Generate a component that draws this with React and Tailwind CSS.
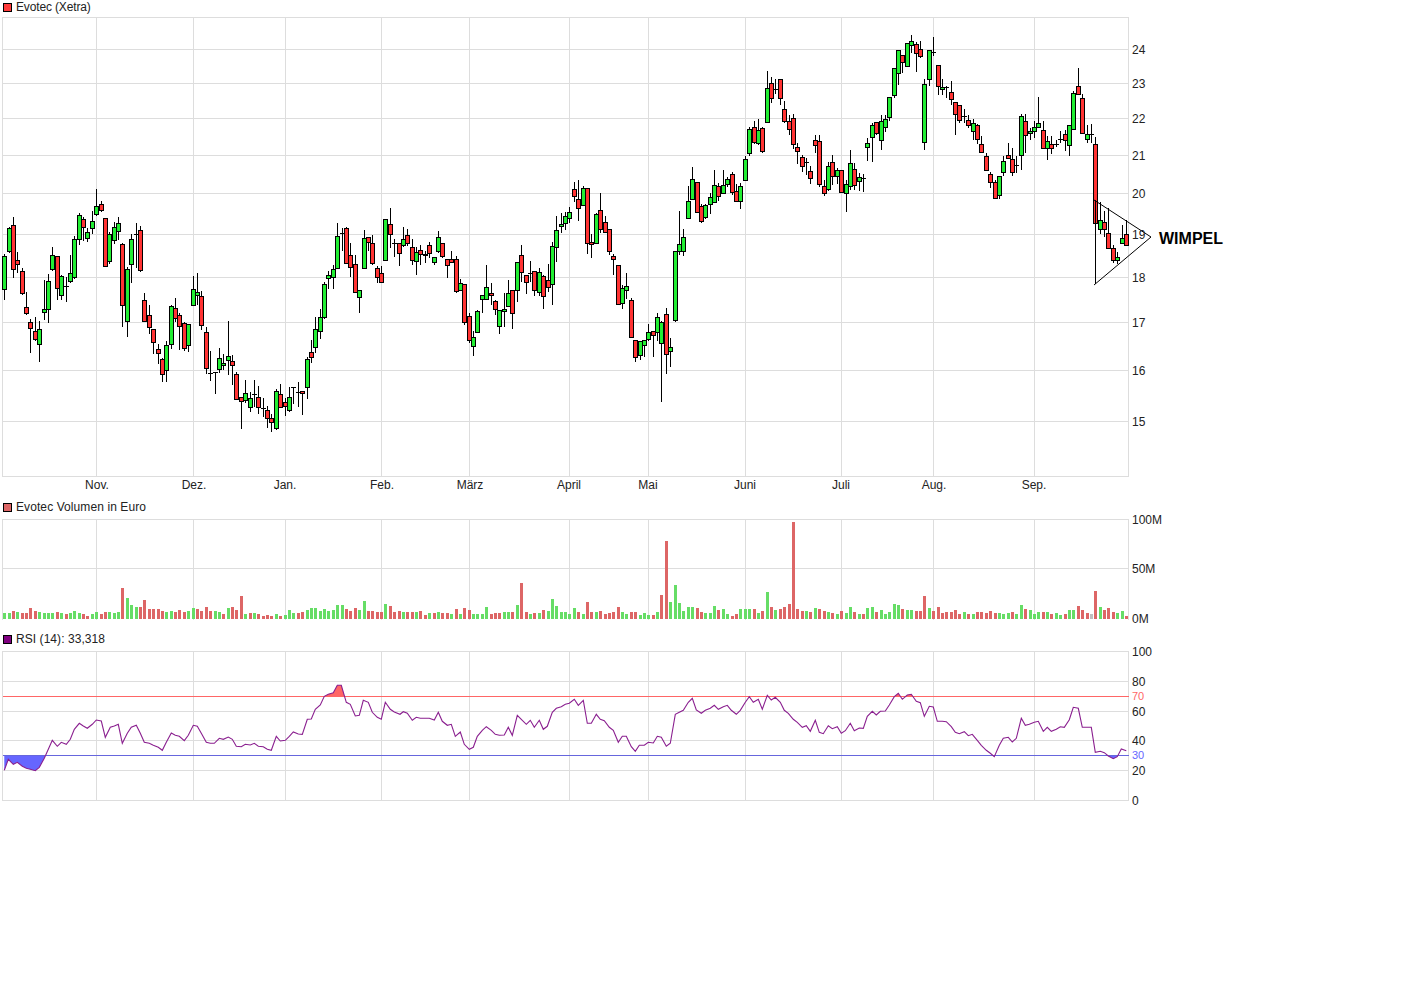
import React from "react";

// wick top, wick bottom, body top, body bottom, colour
const candles = [
  [254,300,256,289,"g"],[227,253,228,251,"g"],[217,278,225,269,"r"],[252,273,260,264,"r"],[268,295,271,293,"r"],
  [292,315,307,313,"r"],[319,353,322,328,"r"],[317,341,331,339,"r"],[321,362,329,344,"g"],[280,320,309,312,"g"],
  [274,323,281,309,"g"],[247,271,255,269,"g"],[256,300,256,288,"r"],[275,300,276,295,"g"],[277,302,286,286,"g"],
  [255,283,273,281,"g"],[236,279,239,277,"g"],[213,245,215,239,"g"],[217,241,219,227,"r"],[228,242,232,238,"g"],
  [211,234,221,228,"g"],[189,216,206,214,"g"],[201,212,204,210,"r"],[218,266,218,266,"r"],[232,264,234,261,"g"],
  [222,244,227,240,"g"],[217,240,223,231,"g"],[243,327,244,305,"r"],[267,337,269,321,"g"],[234,283,239,264,"g"],
  [223,268,234,234,"g"],[226,272,230,270,"r"],[293,322,300,321,"r"],[305,334,315,327,"r"],[329,354,329,342,"r"],
  [344,364,349,353,"r"],[358,382,359,374,"r"],[341,382,345,370,"g"],[305,349,306,344,"g"],[298,322,308,318,"r"],
  [313,350,315,326,"r"],[322,351,323,348,"r"],[324,352,324,345,"g"],[276,305,289,305,"g"],[273,305,292,295,"g"],
  [291,330,296,325,"r"],[327,374,332,368,"r"],[351,381,373,373,"r"],[372,394,372,372,"r"],[348,373,358,369,"g"],
  [354,370,363,365,"g"],[321,375,356,360,"g"],[355,385,361,365,"r"],[372,399,374,399,"r"],[397,429,397,401,"r"],
  [380,403,393,400,"g"],[392,412,398,407,"g"],[380,407,394,394,"g"],[386,414,397,407,"r"],[398,417,408,408,"g"],
  [406,428,410,418,"r"],[414,432,418,422,"r"],[389,430,391,428,"g"],[384,407,394,407,"r"],[398,416,402,406,"r"],
  [387,412,397,410,"g"],[387,404,387,387,"g"],[382,407,392,392,"g"],[391,415,391,393,"r"],[357,399,359,387,"g"],
  [340,363,352,357,"r"],[317,353,329,347,"g"],[309,339,317,331,"g"],[282,319,284,317,"g"],[271,289,275,278,"g"],
  [265,289,269,277,"g"],[223,268,236,268,"g"],[228,251,233,233,"g"],[227,263,228,263,"r"],[243,277,255,267,"r"],
  [255,292,264,292,"r"],[290,313,290,297,"g"],[230,268,238,268,"g"],[237,251,237,242,"r"],[235,265,243,263,"r"],
  [266,283,268,277,"r"],[266,283,273,282,"r"],[219,260,219,260,"g"],[208,248,224,234,"r"],[239,257,243,243,"g"],
  [243,266,243,253,"r"],[227,247,239,245,"g"],[229,246,235,243,"r"],[239,265,247,260,"r"],[247,275,252,261,"g"],
  [245,265,250,254,"r"],[251,263,254,255,"g"],[242,258,245,253,"r"],[257,265,257,262,"g"],[231,253,237,251,"g"],
  [243,258,243,256,"r"],[259,278,259,265,"r"],[251,263,259,262,"r"],[256,293,259,291,"r"],[279,291,283,290,"g"],
  [284,325,284,322,"r"],[313,343,316,340,"r"],[331,356,337,346,"g"],[310,332,311,332,"g"],[295,313,295,299,"g"],
  [265,299,287,299,"g"],[283,305,293,295,"r"],[300,315,301,309,"r"],[310,334,310,326,"g"],[293,327,309,311,"g"],
  [280,306,293,306,"g"],[290,329,290,313,"r"],[262,302,262,290,"g"],[245,282,255,272,"r"],[275,294,275,282,"r"],
  [261,282,273,273,"r"],[271,296,271,290,"r"],[268,296,272,292,"g"],[275,309,276,296,"r"],[264,292,280,287,"r"],
  [242,305,246,284,"g"],[216,262,230,247,"g"],[213,233,224,226,"g"],[212,230,216,223,"g"],[207,223,212,218,"g"],
  [182,202,189,196,"r"],[180,221,199,208,"r"],[186,205,188,205,"g"],[188,254,188,243,"r"],[234,258,242,244,"r"],
  [213,243,214,243,"g"],[193,233,210,229,"r"],[216,232,222,232,"r"],[229,255,229,251,"r"],[254,275,256,259,"r"],
  [265,304,265,304,"r"],[285,309,288,303,"g"],[273,299,286,290,"g"],[298,337,300,337,"r"],[340,362,340,357,"r"],
  [341,360,341,355,"g"],[340,357,340,345,"g"],[324,341,332,339,"g"],[331,357,331,335,"r"],[313,341,317,332,"g"],
  [321,402,322,343,"g"],[308,374,314,354,"r"],[338,367,347,351,"g"],[251,322,251,320,"g"],[211,255,244,251,"g"],
  [229,256,237,251,"g"],[186,218,201,218,"g"],[167,199,179,199,"g"],[182,213,182,212,"r"],[204,223,206,221,"r"],
  [204,219,205,217,"g"],[193,214,197,204,"g"],[170,202,185,202,"g"],[183,201,186,196,"r"],[170,193,185,193,"g"],
  [177,187,179,184,"g"],[172,195,174,192,"r"],[184,201,191,201,"r"],[183,209,186,201,"g"],[156,180,159,180,"g"],
  [127,156,129,153,"g"],[121,144,127,142,"r"],[119,145,130,143,"g"],[127,153,128,151,"r"],[71,123,88,122,"g"],
  [77,103,83,98,"r"],[79,94,89,89,"g"],[79,105,79,98,"r"],[101,123,109,121,"r"],[115,135,121,129,"r"],
  [114,149,118,144,"r"],[143,164,147,151,"r"],[155,172,157,166,"r"],[158,175,162,162,"r"],[166,184,171,178,"r"],
  [135,153,140,145,"r"],[135,187,141,184,"r"],[180,196,186,193,"r"],[162,191,166,189,"g"],[155,185,162,176,"r"],
  [168,184,170,176,"g"],[170,193,170,192,"r"],[180,212,184,193,"g"],[150,190,163,186,"g"],[163,190,169,185,"r"],
  [173,191,177,181,"g"],[174,192,178,178,"g"],[138,161,143,147,"g"],[123,162,125,137,"g"],[122,135,122,133,"r"],
  [115,150,121,140,"g"],[115,132,119,127,"g"],[97,121,97,117,"g"],[68,98,68,95,"g"],[50,85,50,73,"g"],
  [55,73,55,62,"r"],[43,67,43,66,"g"],[35,53,41,45,"g"],[42,72,44,53,"r"],[41,58,49,56,"r"],
  [79,150,84,142,"g"],[50,86,50,79,"g"],[37,56,52,52,"g"],[65,95,65,86,"r"],[79,95,87,89,"g"],
  [86,98,87,87,"g"],[81,105,92,99,"r"],[102,135,102,114,"r"],[105,123,105,120,"r"],[109,123,116,116,"g"],
  [115,128,120,125,"r"],[119,140,123,131,"g"],[124,144,125,139,"r"],[136,152,144,152,"r"],[153,170,156,170,"r"],
  [172,188,174,182,"r"],[180,198,182,198,"r"],[176,199,176,195,"g"],[156,176,161,172,"g"],[143,159,155,158,"r"],
  [148,176,159,172,"r"],[156,173,165,165,"g"],[114,170,116,155,"g"],[114,153,121,135,"r"],[128,140,131,133,"g"],
  [121,138,127,131,"g"],[97,127,123,127,"g"],[121,148,130,148,"r"],[136,160,141,148,"g"],[136,154,144,148,"r"],
  [140,147,144,144,"g"],[131,143,139,139,"g"],[130,151,134,140,"r"],[125,156,125,145,"g"],[91,129,93,129,"g"],
  [68,94,86,94,"r"],[94,133,98,133,"r"],[125,143,134,139,"g"],[124,143,134,134,"g"],[137,223,144,223,"r"],
  [202,234,220,229,"g"],[211,237,222,229,"r"],[208,248,233,248,"r"],[245,263,248,260,"r"],[252,264,257,260,"g"],
  [225,243,238,243,"g"],[220,245,234,245,"r"],
];

// bar height in px: positive green, negative red, 0 is the one gray bar
const volume = [
  6,6,-8,7,-6,-6,-11,-8,7,6,6,6,-7,6,-5,6,8,6,-5,-3,5,7,-5,-7,7,6,7,-31,21,14,12,-12,-19,-10,-10,-10,-8,7,8,-7,
  -9,-7,8,11,-10,-8,-12,-8,8,7,-5,11,-12,-9,-23,5,-6,6,-5,-3,-4,-3,5,-3,4,9,6,-6,-7,9,11,11,8,10,8,9,14,14,-10,-8,
  -11,9,18,-8,-8,-7,-7,15,-13,-7,-8,
  7,-7,-7,7,-8,-4,6,-6,7,-6,-6,5,-10,5,-11,-9,5,5,5,12,-5,-6,-6,7,7,-7,14,-36,-7,5,-6,6,-9,8,20,13,7,7,5,11,-7,5,-17,
  -7,7,-8,-5,-6,-7,-12,7,5,-7,-7,4,6,4,-4,7,-24,-78,17,34,16,8,12,12,-11,-7,6,6,13,-9,10,5,-3,-5,10,10,10,-10,6,-8,27,
  -12,9,-10,-12,-15,-97,-10,
  -8,8,-7,11,-10,-8,7,-6,5,-8,6,12,-7,5,-5,11,12,-7,9,5,7,15,14,-10,9,9,-8,-8,-23,11,-8,-12,-6,-7,-7,-9,-5,7,-5,5,-7,
  -7,-6,-8,-6,6,5,6,-7,5,14,-10,9,5,7,-7,7,-5,6,4,-5,9,9,-13,-9,-6,0,-28,12,-9,-11,-7,6,8,-3,
];

// RSI read as [x, y] in 3x units of the crop each part was taken from
const rsiA = [[13,421],[25,388],[40,403],[52,397],[67,409],[79,415],[91,418],[106,422],[118,412],[133,385],[145,358],[157,331],[172,349],[184,337],[199,343],[211,328],[223,298],[238,280],[250,288],[262,295],[277,283],[289,270],[304,273],[316,322],[331,292],[343,288],[355,283],[367,340],[382,310],[394,292],[409,286],[421,310],[433,337],[448,340],[460,346],[475,352],[487,361],[499,337],[514,309],[526,316],[538,319],[553,332],[565,316],[580,286],[592,289],[604,310],[619,337],[631,340],[643,340],[658,325],[670,328],[685,321],[697,328],[709,349],[724,350],[736,343],[751,345],[763,340],[775,349],[790,350],[802,358],[814,361],[829,319],[841,333],[856,331],[868,319],[880,306],[895,312],[907,313],[922,268],[934,267],[946,238],[961,225],[973,199],[985,193],[1000,188],[1012,166],[1024,166],[1039,217],[1051,223],[1066,258],[1078,256],[1090,211],[1105,217],[1117,247],[1132,262],[1144,268],[1156,217],[1171,238],[1183,246]];
const rsiB = [[0,133],[10,125],[22,130],[37,151],[49,142],[61,145],[76,145],[88,145],[103,150],[115,127],[127,154],[142,166],[154,163],[166,199],[181,186],[193,223],[208,238],[220,232],[232,199],[247,181],[259,170],[274,181],[286,193],[298,196],[313,195],[325,172],[337,196],[352,136],[364,148],[379,163],[391,151],[403,172],[418,151],[430,178],[442,169],[457,127],[469,115],[484,110],[496,103],[508,100],[523,88],[535,106],[550,91],[562,160],[574,160],[589,133],[601,148],[613,152],[628,172],[640,181],[655,217],[667,199],[679,199],[694,230],[706,244],[718,226],[733,226],[745,217],[760,219],[772,199],[784,202],[799,229],[811,220],[826,133],[838,127],[850,121],[865,97],[877,85],[889,120],[904,130],[916,121],[931,115],[943,106],[955,118],[970,110],[982,106],[994,121],[1009,133],[1021,121],[1036,97],[1048,80],[1060,97],[1075,88],[1087,118],[1102,76],[1114,90],[1126,82]];
const rsiC = [[1,97],[13,121],[25,130],[40,148],[52,157],[67,172],[79,167],[91,184],[106,151],[118,187],[130,191],[145,167],[157,176],[172,170],[184,190],[196,182],[211,160],[223,182],[238,174],[250,175],[262,139],[277,124],[289,135],[301,124],[316,123],[328,105],[343,80],[355,70],[367,88],[382,75],[394,73],[409,94],[421,98],[433,139],[448,109],[460,111],[472,154],[487,154],[499,155],[514,170],[526,187],[538,191],[553,185],[565,197],[577,193],[592,211],[604,226],[619,241],[631,250],[643,260],[658,226],[670,205],[685,202],[697,216],[709,205],[724,145],[736,166],[748,163],[763,157],[775,154],[790,184],[802,172],[814,184],[829,178],[841,170],[853,172],[868,149],[880,112],[895,115],[907,172],[919,172],[934,172],[946,247],[961,244],[973,248],[985,258],[1000,266],[1012,260],[1024,237],[1039,242]];

const rsiPoints = [
  ...rsiA.map(([x, y]) => [x / 3, 630 + y / 3]),
  ...rsiB.map(([x, y]) => [400 + x / 3, 670 + y / 3]),
  ...rsiC.map(([x, y]) => [780 + x / 3, 670 + y / 3]),
];
const rsiLine = rsiPoints.map(([x, y]) => `${x.toFixed(1)},${y.toFixed(1)}`).join(" ");

// label, gridline x, label centre x
const months = [
  ["Nov.", 96, 97], ["Dez.", 193, 194], ["Jan.", 285, 285], ["Feb.", 381, 382], ["März", 469, 470], ["April", 569, 569],
  ["Mai", 648, 648], ["Juni", 745, 745], ["Juli", 841, 841], ["Aug.", 933, 934], ["Sep.", 1034, 1034],
];
const priceTicks = [["24", 49], ["23", 83], ["22", 118], ["21", 155], ["20", 193], ["19", 234], ["18", 277], ["17", 322], ["16", 370], ["15", 421]];
const rsiTicks = [["100", 656], ["80", 686], ["60", 716], ["40", 745], ["20", 775], ["0", 805]];

const candleX = (i) => Math.floor(4.68 + i * 4.382);

const Grid = ({ top, bottom, rows }) => (
  <g shapeRendering="crispEdges" className="stroke-[#dddddd]">
    {rows.map((y) => <line key={y} x1="2" x2="1129" y1={y + 0.5} y2={y + 0.5} />)}
    {[2, ...months.map((m) => m[1]), 1128].map((x) => <line key={x} x1={x + 0.5} x2={x + 0.5} y1={top} y2={bottom + 1} />)}
  </g>
);

const Legend = ({ color, tracking, children }) => (
  <div className="flex h-[14px] items-center gap-[4px] pl-[3px] text-[12px] leading-[14px] text-[#222222]">
    <span className={`h-[9px] w-[9px] border border-black ${color}`}></span>
    <span className={tracking}>{children}</span>
  </div>
);

const Candle = ({ c, i }) => {
  const [wt, wb, bt, bb, col] = c;
  const x = candleX(i);
  return (
    <g shapeRendering="crispEdges" className="stroke-black">
      <line x1={x + 0.5} x2={x + 0.5} y1={wt} y2={wb} />
      {bt === bb ? (
        <line x1={x - 2} x2={x + 3} y1={bt + 0.5} y2={bt + 0.5} />
      ) : (
        <rect x={x - 1.5} y={bt + 0.5} width="4" height={bb - bt} className={col === "g" ? "fill-[#22ee33]" : "fill-[#ff3333]"} />
      )}
    </g>
  );
};

const App = () => {
  return (
    <div className="h-[983px] w-[1421px] bg-white font-['Liberation_Sans',Arial,sans-serif]">
      <Legend color="bg-[#ff3b3b]" tracking="tracking-[-0.15px]">Evotec (Xetra)</Legend>
      <svg className="block" width="1421" height="486" viewBox="0 14 1421 486">
        <Grid top={17} bottom={476} rows={[17, 49, 83, 118, 155, 193, 234, 277, 322, 370, 421, 476]} />
        {candles.map((c, i) => <Candle key={i} c={c} i={i} />)}
        <polyline points="1094,285 1151,237 1094,200" fill="none" stroke="black" strokeWidth="1" />
        <line x1="1095.5" x2="1095.5" y1="200" y2="284" stroke="black" shapeRendering="crispEdges" />
        <g className="fill-[#222222] text-[12px]">
          {priceTicks.map(([t, y]) => <text key={t} x="1132" y={y + 5}>{t}</text>)}
          {months.map(([t, , x]) => <text key={t} x={x} y="489" textAnchor="middle">{t}</text>)}
        </g>
        <text x="1159" y="244" className="fill-black text-[16px] font-bold">WIMPEL</text>
      </svg>

      <Legend color="bg-[#dd6666]" tracking="tracking-[0.09px]">Evotec Volumen in Euro</Legend>
      <svg className="block" width="1421" height="118" viewBox="0 514 1421 118">
        <Grid top={519} bottom={619} rows={[519, 568]} />
        <g shapeRendering="crispEdges">
          {volume.map((v, i) => (
            <rect
              key={i}
              x={candleX(i) - 1}
              y={619 - (v === 0 ? 5 : Math.abs(v))}
              width="3"
              height={v === 0 ? 5 : Math.abs(v)}
              className={v === 0 ? "fill-[#c0c0c0]" : v > 0 ? "fill-[#66dd66]" : "fill-[#dd6666]"}
            />
          ))}
        </g>
        <g className="fill-[#222222] text-[12px]">
          <text x="1132" y="524">100M</text>
          <text x="1132" y="573">50M</text>
          <text x="1132" y="623">0M</text>
        </g>
      </svg>

      <Legend color="bg-[#800080]" tracking="tracking-[0.06px]">RSI (14): 33,318</Legend>
      <svg className="block" width="1421" height="170" viewBox="0 646 1421 170">
        <defs>
          <clipPath id="over"><rect x="0" y="640" width="1130" height="56.5" /></clipPath>
          <clipPath id="under"><rect x="0" y="755.5" width="1130" height="50" /></clipPath>
        </defs>
        <Grid top={651} bottom={800} rows={[651, 681, 711, 740, 770, 800]} />
        <polygon points={`${rsiLine} 1126,900 4,900`} clipPath="url(#over)" className="fill-[#ff6666]" />
        <polygon points={`${rsiLine} 1126,600 4,600`} clipPath="url(#under)" className="fill-[#6666ff]" />
        <g shapeRendering="crispEdges">
          <line x1="3" x2="1129" y1="696.5" y2="696.5" className="stroke-[#ff6666]" />
          <line x1="3" x2="1129" y1="755.5" y2="755.5" className="stroke-[#6666dd]" />
        </g>
        <polyline points={rsiLine} fill="none" strokeWidth="1.1" className="stroke-[#8a1f8f]" />
        <g className="fill-[#222222] text-[12px]">
          {rsiTicks.map(([t, y]) => <text key={t} x="1132" y={y}>{t}</text>)}
        </g>
        <text x="1132" y="700" className="fill-[#ff6666] text-[11px]">70</text>
        <text x="1132" y="759" className="fill-[#6666ff] text-[11px]">30</text>
      </svg>
    </div>
  );
};

export default App;
